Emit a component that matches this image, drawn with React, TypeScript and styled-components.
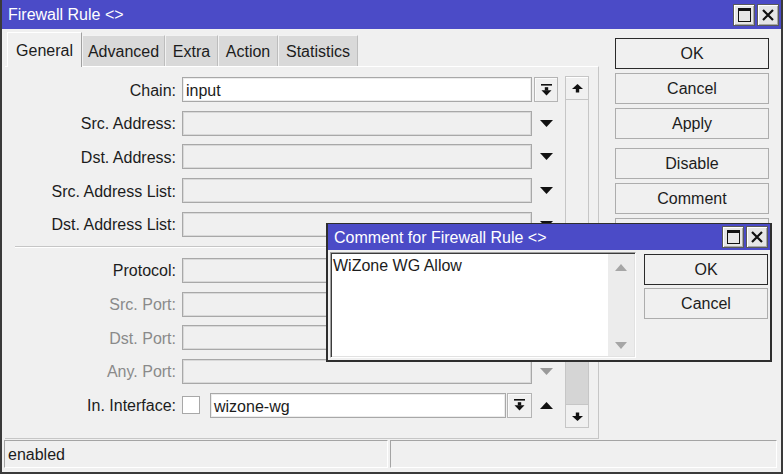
import React from "react";
import styled, { createGlobalStyle } from "styled-components";

const palette = {
  title: "#4b4bc7",
  bg: "#f0f0f0",
  tab: "#d9d9d9",
  border: "#a8a8a8",
  dark: "#2a2a2a",
  text: "#1c1c1c",
  muted: "#8a8a8a",
  light: "#c6c6c6",
};

const GlobalStyle = createGlobalStyle`
  html, body {
    margin: 0;
    padding: 0;
    background: ${palette.bg};
  }
  body {
    font-family: "Liberation Sans", Arial, sans-serif;
    font-size: 16px;
    color: ${palette.text};
  }
  * {
    box-sizing: border-box;
  }
`;

const Window = styled.div`
  position: relative;
  width: 783px;
  height: 474px;
  display: flex;
  flex-direction: column;
  background: ${palette.bg};
  border: 2px solid #3a3a3a;
  border-top: 0;
  overflow: hidden;
`;

const TitleBar = styled.div<{ $height: number }>`
  height: ${(p) => p.$height}px;
  flex: none;
  display: flex;
  align-items: center;
  justify-content: space-between;
  padding: 0 2px 0 6px;
  background: ${palette.title};
  color: #fff;
  white-space: nowrap;
`;

const TitleText = styled.span`
  padding-top: 1px;
`;

const TitleButtons = styled.div`
  display: flex;
  gap: 2px;
`;

const TitleBtn = styled.div`
  width: 22px;
  height: 22px;
  display: flex;
  align-items: center;
  justify-content: center;
  background: #e6e6e6;
  border: 1px solid #5a5a5a;
  box-shadow: inset 1px 1px 0 #fff, inset -1px -1px 0 #a9a9a9;
`;

const Body = styled.div`
  flex: 1;
  display: flex;
  min-height: 0;
`;

const LeftSide = styled.div`
  width: 594px;
  margin-left: 3px;
  display: flex;
  flex-direction: column;
`;

const TabStrip = styled.div`
  height: 34px;
  margin-top: 3px;
  padding-left: 2px;
  display: flex;
  align-items: flex-end;
`;

const Tab = styled.div<{ $width: number; $active?: boolean }>`
  width: ${(p) => p.$width}px;
  height: ${(p) => (p.$active ? 35 : 31)}px;
  margin-bottom: ${(p) => (p.$active ? -1 : 0)}px;
  position: relative;
  z-index: ${(p) => (p.$active ? 1 : 0)};
  display: flex;
  align-items: center;
  justify-content: center;
  padding-top: 1px;
  background: ${(p) => (p.$active ? palette.bg : palette.tab)};
  border-top: 1px solid ${(p) => (p.$active ? "#fff" : "#f2f2f2")};
  border-left: 1px solid ${(p) => (p.$active ? "#fff" : "#f2f2f2")};
  border-right: 1px solid ${(p) => (p.$active ? "#a0a0a0" : "#bdbdbd")};
  white-space: nowrap;
`;

const Panel = styled.div`
  flex: 1;
  display: flex;
  border-top: 1px solid #fff;
  border-right: 1px solid ${palette.light};
  border-bottom: 1px solid ${palette.light};
`;

const Form = styled.div`
  width: 553px;
  padding-top: 10px;
  display: flex;
  flex-direction: column;
  gap: 8.7px;
`;

const Row = styled.div`
  height: 25px;
  display: flex;
  align-items: center;
`;

const Label = styled.span<{ $muted?: boolean }>`
  width: 171px;
  margin-right: 6px;
  padding-top: 2px;
  text-align: right;
  white-space: nowrap;
  color: ${(p) => (p.$muted ? palette.muted : palette.text)};
`;

const Field = styled.div<{ $width: number; $editable?: boolean }>`
  width: ${(p) => p.$width}px;
  height: 25px;
  padding: 0 3px;
  line-height: 25px;
  white-space: nowrap;
  background: ${(p) => (p.$editable ? "#fff" : palette.bg)};
  border: 1px solid ${palette.border};
  box-shadow: inset 0 0 0 1px ${(p) => (p.$editable ? "#ececec" : "#d9d9d9")};
`;

const Check = styled.div`
  width: 18px;
  height: 18px;
  margin-right: 10px;
  background: #fff;
  border: 1px solid ${palette.border};
`;

const ArrowCell = styled.div`
  width: 24px;
  height: 25px;
  margin-left: 2px;
  display: flex;
  align-items: center;
  justify-content: center;
`;

const DropButton = styled.div<{ $width: number; $offset?: number }>`
  width: ${(p) => p.$width}px;
  height: 25px;
  flex: none;
  margin-left: ${(p) => p.$offset || 0}px;
  display: flex;
  align-items: center;
  justify-content: center;
  background: ${palette.bg};
  border: 1px solid #b4b4b4;
  box-shadow: inset 1px 1px 0 #fafafa;
`;

const Separator = styled.div`
  width: 545px;
  height: 2px;
  margin: 0.9px 0 0.9px 10px;
  border-top: 1px solid ${palette.light};
  border-bottom: 1px solid #fff;
`;

const ScrollBar = styled.div`
  width: 24px;
  margin: 9px 0 10px 7px;
  display: flex;
  flex-direction: column;
  border: 1px solid ${palette.light};
`;

const ScrollBtn = styled.div`
  height: 23px;
  flex: none;
  display: flex;
  align-items: center;
  justify-content: center;
  background: ${palette.bg};
  border-top: 1px solid #fff;
  border-bottom: 1px solid ${palette.light};
  &:last-child {
    border-bottom: 0;
    border-top: 1px solid ${palette.light};
  }
`;

const ScrollTrack = styled.div`
  flex: 1;
  display: flex;
  flex-direction: column;
  justify-content: flex-end;
`;

const Thumb = styled.div`
  height: 105px;
  background: #d5d5d5;
`;

const RightSide = styled.div`
  width: 154px;
  margin-left: 16px;
  padding-top: 9px;
  display: flex;
  flex-direction: column;
  gap: 4px;
`;

const Button = styled.div<{ $primary?: boolean; $gapBefore?: number }>`
  height: 31px;
  flex: none;
  margin-top: ${(p) => p.$gapBefore || 0}px;
  padding-top: 1px;
  display: flex;
  align-items: center;
  justify-content: center;
  background: ${palette.bg};
  border: 1px solid ${(p) => (p.$primary ? palette.dark : "#adadad")};
  white-space: nowrap;
`;

const StatusBar = styled.div`
  height: 28px;
  flex: none;
  margin: 1px 4px 4px 2px;
  display: flex;
  gap: 2px;
`;

const StatusCell = styled.div<{ $width?: number }>`
  ${(p) => (p.$width ? `width: ${p.$width}px;` : "flex: 1;")}
  padding: 2px 0 0 3px;
  display: flex;
  align-items: center;
  border-top: 1px solid #a4a4a4;
  border-left: 1px solid #a4a4a4;
  border-bottom: 1px solid #fff;
  border-right: 1px solid #fff;
`;

/* comment dialog floats over the rule window */
const Dialog = styled.div`
  position: absolute;
  left: 324px;
  top: 223px;
  width: 446px;
  height: 139px;
  display: flex;
  flex-direction: column;
  background: ${palette.bg};
  border: 2px solid #2e2e2e;
  border-top: 1px solid #2e2e2e;
`;

const DialogBody = styled.div`
  flex: 1;
  display: flex;
  padding: 2px;
  gap: 8px;
`;

const TextArea = styled.div`
  width: 306px;
  height: 106px;
  display: flex;
  background: #fff;
  border-top: 1px solid #a0a0a0;
  border-left: 1px solid #a0a0a0;
  border-bottom: 1px solid #fff;
  border-right: 1px solid #fff;
  box-shadow: inset 1px 1px 0 #3c3c3c, inset -1px -1px 0 #e2e2e2;
`;

const TextContent = styled.div`
  flex: 1;
  padding: 4px 0 0 2px;
  white-space: nowrap;
`;

const TextScroll = styled.div`
  width: 26px;
  margin: 1px 1px 1px 0;
  padding: 10px 0 7px;
  display: flex;
  flex-direction: column;
  align-items: center;
  justify-content: space-between;
  background: #ececec;
`;

const DialogButtons = styled.div`
  width: 124px;
  padding-top: 2px;
  display: flex;
  flex-direction: column;
  gap: 3px;
`;

const MaxIcon = () => (
  <svg width="13" height="14" viewBox="0 0 13 14">
    <rect x="0.5" y="0.5" width="12" height="13" fill="none" stroke="#111" />
    <rect x="0" y="0" width="13" height="3" fill="#111" />
  </svg>
);

const CloseIcon = () => (
  <svg width="12" height="12" viewBox="0 0 12 12">
    <path d="M1 1 L11 11 M11 1 L1 11" stroke="#111" strokeWidth="2.2" />
  </svg>
);

const BarDownIcon = () => (
  <svg width="11" height="12" viewBox="0 0 11 12">
    <rect x="0" y="0" width="11" height="1.6" fill="#111" />
    <rect x="3.8" y="3.2" width="3.4" height="3.3" fill="#111" />
    <polygon points="0.5,6.3 10.5,6.3 5.5,11.5" fill="#111" />
  </svg>
);

const Tri = ({ up, color = "#111" }: { up?: boolean; color?: string }) => (
  <svg width="13" height="7" viewBox="0 0 13 7">
    <polygon points={up ? "0,7 13,7 6.5,0" : "0,0 13,0 6.5,7"} fill={color} />
  </svg>
);

const StemArrow = ({ up }: { up?: boolean }) => (
  <svg width="11" height="9" viewBox="0 0 11 9">
    {up ? (
      <>
        <polygon points="0,5 11,5 5.5,0" fill="#111" />
        <rect x="3.8" y="5" width="3.4" height="3.5" fill="#111" />
      </>
    ) : (
      <>
        <rect x="3.8" y="0.5" width="3.4" height="3.5" fill="#111" />
        <polygon points="0,4 11,4 5.5,9" fill="#111" />
      </>
    )}
  </svg>
);

const GrayTri = ({ up }: { up?: boolean }) => (
  <svg width="12" height="7" viewBox="0 0 12 7">
    <polygon points={up ? "0,7 12,7 6,0" : "0,0 12,0 6,7"} fill="#a6a6a6" />
  </svg>
);

type FieldRow = {
  label: string;
  value?: string;
  editable?: boolean;
  muted?: boolean;
  action: "drop" | "tri" | "muted";
};

const topRows: FieldRow[] = [
  { label: "Chain:", value: "input", editable: true, action: "drop" },
  { label: "Src. Address:", action: "tri" },
  { label: "Dst. Address:", action: "tri" },
  { label: "Src. Address List:", action: "tri" },
  { label: "Dst. Address List:", action: "tri" },
];

const bottomRows: FieldRow[] = [
  { label: "Protocol:", action: "tri" },
  { label: "Src. Port:", muted: true, action: "muted" },
  { label: "Dst. Port:", muted: true, action: "muted" },
  { label: "Any. Port:", muted: true, action: "muted" },
];

const tabs = [
  { name: "General", width: 75 },
  { name: "Advanced", width: 83 },
  { name: "Extra", width: 53 },
  { name: "Action", width: 60 },
  { name: "Statistics", width: 80 },
];

// the last one is mostly under the comment dialog, only its top edge shows
const sideButtons = [
  { text: "OK", primary: true },
  { text: "Cancel" },
  { text: "Apply" },
  { text: "Disable", gap: 5 },
  { text: "Comment" },
  { text: "" },
];

const renderRow = (row: FieldRow) => (
  <Row key={row.label}>
    <Label $muted={row.muted}>{row.label}</Label>
    <Field $width={350} $editable={row.editable}>
      {row.value}
    </Field>
    <ArrowCell>
      {row.action === "drop" && (
        <DropButton $width={24}>
          <BarDownIcon />
        </DropButton>
      )}
      {row.action === "tri" && <Tri />}
      {row.action === "muted" && <Tri color="#9a9a9a" />}
    </ArrowCell>
  </Row>
);

const App: React.FC = () => {
  return (
    <>
      <GlobalStyle />
      <Window>
        <TitleBar $height={29}>
          <TitleText>Firewall Rule &lt;&gt;</TitleText>
          <TitleButtons>
            <TitleBtn>
              <MaxIcon />
            </TitleBtn>
            <TitleBtn>
              <CloseIcon />
            </TitleBtn>
          </TitleButtons>
        </TitleBar>

        <Body>
          <LeftSide>
            <TabStrip>
              {tabs.map((tab, index) => (
                <Tab key={tab.name} $width={tab.width} $active={index === 0}>
                  {tab.name}
                </Tab>
              ))}
            </TabStrip>
            <Panel>
              <Form>
                {topRows.map(renderRow)}
                <Separator />
                {bottomRows.map(renderRow)}
                <Row>
                  <Label>In. Interface:</Label>
                  <Check />
                  <Field $width={296} $editable>
                    wizone-wg
                  </Field>
                  <DropButton $width={25} $offset={1}>
                    <BarDownIcon />
                  </DropButton>
                  <ArrowCell>
                    <Tri up />
                  </ArrowCell>
                </Row>
              </Form>
              <ScrollBar>
                <ScrollBtn>
                  <StemArrow up />
                </ScrollBtn>
                <ScrollTrack>
                  <Thumb />
                </ScrollTrack>
                <ScrollBtn>
                  <StemArrow />
                </ScrollBtn>
              </ScrollBar>
            </Panel>
          </LeftSide>

          <RightSide>
            {sideButtons.map((btn, i) => (
              <Button key={i} $primary={btn.primary} $gapBefore={btn.gap}>
                {btn.text}
              </Button>
            ))}
          </RightSide>
        </Body>

        <StatusBar>
          <StatusCell $width={384}>enabled</StatusCell>
          <StatusCell />
        </StatusBar>

        <Dialog>
          <TitleBar $height={26}>
            <TitleText>Comment for Firewall Rule &lt;&gt;</TitleText>
            <TitleButtons>
              <TitleBtn>
                <MaxIcon />
              </TitleBtn>
              <TitleBtn>
                <CloseIcon />
              </TitleBtn>
            </TitleButtons>
          </TitleBar>
          <DialogBody>
            <TextArea>
              <TextContent>WiZone WG Allow</TextContent>
              <TextScroll>
                <GrayTri up />
                <GrayTri />
              </TextScroll>
            </TextArea>
            <DialogButtons>
              <Button $primary>OK</Button>
              <Button>Cancel</Button>
            </DialogButtons>
          </DialogBody>
        </Dialog>
      </Window>
    </>
  );
};

export default App;
